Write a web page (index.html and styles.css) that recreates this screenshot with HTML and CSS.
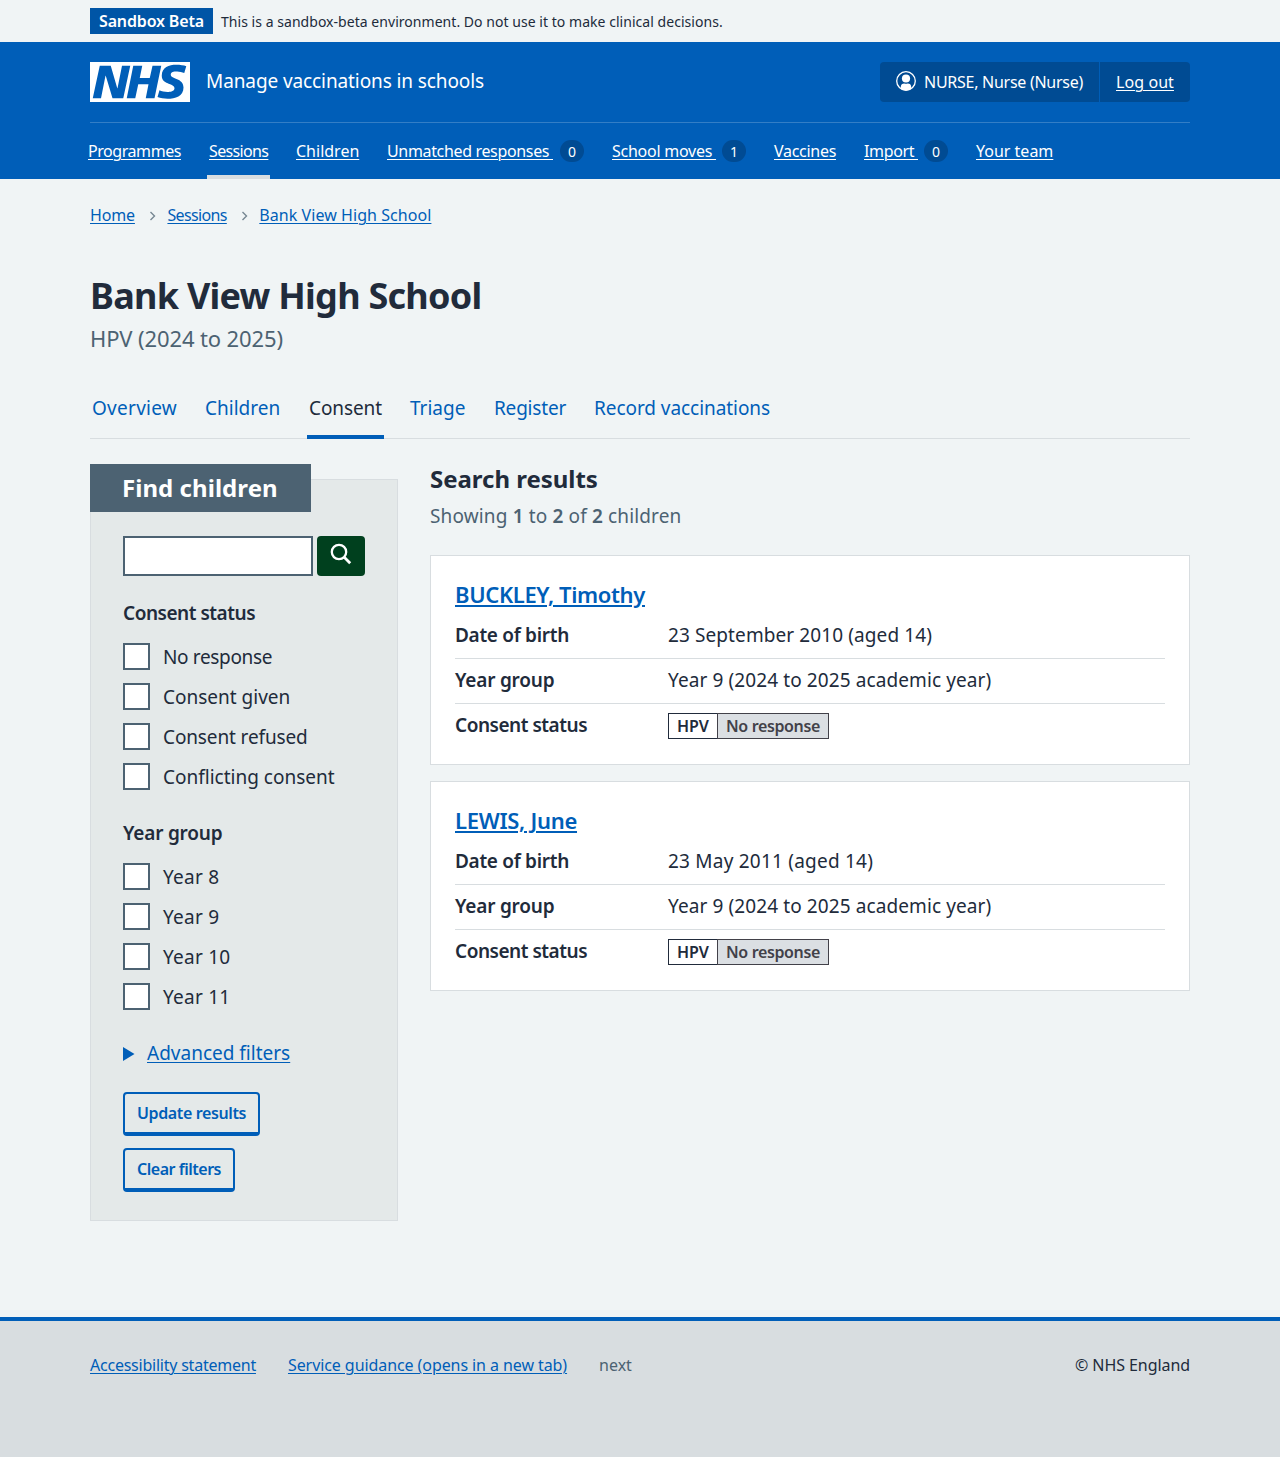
FILE: index.html
```html
<!DOCTYPE html>
<html lang="en">
<head>
<meta charset="utf-8">
<title>Bank View High School – Manage vaccinations in schools</title>
<link rel="stylesheet" href="styles.css">
</head>
<body>
<div class="env"><div class="container env-inner"><strong class="env-tag">Sandbox Beta</strong><span class="env-text">This is a sandbox-beta environment. Do not use it to make clinical decisions.</span></div></div>
<header class="header">
  <div class="container">
    <div class="header-top">
      <a class="logo" href="#" aria-label="NHS">
        <svg width="100" height="40" viewBox="0 0 200 80"><path fill="#fff" d="M0 0h200v80H0z"/><path fill="#005eb8" d="M172.500 5.500c-14.500 0-29 5-29 22 0 10.200 7.700 13.500 14.700 16.300l.7.300c5.400 2 10.100 3.900 10.100 8.400 0 6.500-8.500 7.500-14 7.500s-12.500-1.500-16-3.500L135 70c5.500 2 13.500 3.500 20 3.500 15.500 0 32-4.500 32-22.500 0-19.500-25.500-16.500-25.500-25.500 0-5.500 5.500-6.500 12.500-6.500a35 35 0 0 1 14.500 3l4-13.500c-4.500-2-12-3-20-3Zm-131 2h-22l-14 65H22l9-45h.5l13.500 45h21.500l14-65H64l-9 45h-.5l-13-45Zm63 0h-18l-13 65h17l6-28H117l-5.500 28H129l13.500-65H125L119.500 32h-20l5-24.500Z"/></svg>
      </a>
      <a class="service" href="#">Manage vaccinations in schools</a>
      <div class="account">
        <div class="account-item account-user"><svg class="account-icon" width="20" height="20" viewBox="0 0 20 20"><defs><clipPath id="disc"><circle cx="10" cy="10" r="9.500"/></clipPath></defs><circle cx="10" cy="10" r="9.300" fill="none" stroke="#fff" stroke-width="1.300"/><circle cx="10" cy="7.500" r="4.100" fill="#fff"/><path clip-path="url(#disc)" fill="#fff" d="M4.800 20v-4.200c0-2.200 1.500-3.400 3.400-3.400.6.300 1.200.4 1.800.4s1.200-.1 1.800-.4c1.900 0 3.400 1.200 3.400 3.400V20z"/></svg><span>NURSE, Nurse (Nurse)</span></div>
        <div class="account-item account-out"><a href="#">Log out</a></div>
      </div>
    </div>
    <nav class="nav">
      <div class="nav-item"><a class="l-prog" href="#">Programmes</a></div>
      <div class="nav-item is-current"><a class="l-sess" href="#">Sessions</a></div>
      <div class="nav-item"><a href="#">Children</a></div>
      <div class="nav-item"><a class="l-unm" href="#">Unmatched responses&nbsp;</a><span class="badge">0</span></div>
      <div class="nav-item"><a class="l-moves" href="#">School moves&nbsp;</a><span class="badge">1</span></div>
      <div class="nav-item"><a class="l-vac" href="#">Vaccines</a></div>
      <div class="nav-item"><a class="l-imp" href="#">Import&nbsp;</a><span class="badge">0</span></div>
      <div class="nav-item"><a href="#">Your team</a></div>
    </nav>
  </div>
</header>
<div class="container">
  <nav class="crumbs">
    <a class="l-home" href="#">Home</a>
    <svg width="8" height="10" viewBox="0 0 8 10"><path d="M1.500 1l4 4-4 4" fill="none" stroke="#768692" stroke-width="1.400"/></svg>
    <a class="l-sess" href="#">Sessions</a>
    <svg width="8" height="10" viewBox="0 0 8 10"><path d="M1.500 1l4 4-4 4" fill="none" stroke="#768692" stroke-width="1.400"/></svg>
    <a class="l-crumb" href="#">Bank View High School</a>
  </nav>
  <h1>Bank View High School</h1>
  <p class="caption">HPV (2024 to 2025)</p>
  <nav class="tabs">
    <a class="l-over" href="#">Overview</a>
    <a href="#">Children</a>
    <a class="is-current" href="#">Consent</a>
    <a href="#">Triage</a>
    <a class="l-reg" href="#">Register</a>
    <a class="l-rec" href="#">Record vaccinations</a>
  </nav>
  <div class="columns">
    <form class="filters">
      <h2 class="filters-title">Find children</h2>
      <div class="search"><input type="text" aria-label="Search"><button class="search-btn" type="button" aria-label="Search"><svg width="24" height="24" viewBox="0 0 24 24" fill="none" stroke="#fff" stroke-width="2.300"><circle cx="10" cy="10" r="7.200"/><path d="M15 15l6.200 6.200" stroke-width="2.800"/></svg></button></div>
      <fieldset class="group">
        <legend class="l-cs">Consent status</legend>
        <label class="check"><input type="checkbox"><span class="l-nr">No response</span></label>
        <label class="check"><input type="checkbox"><span>Consent given</span></label>
        <label class="check"><input type="checkbox"><span class="l-ref">Consent refused</span></label>
        <label class="check"><input type="checkbox"><span>Conflicting consent</span></label>
      </fieldset>
      <fieldset class="group">
        <legend class="l-yg">Year group</legend>
        <label class="check"><input type="checkbox"><span class="l-year">Year 8</span></label>
        <label class="check"><input type="checkbox"><span class="l-year">Year 9</span></label>
        <label class="check"><input type="checkbox"><span class="l-year">Year 10</span></label>
        <label class="check"><input type="checkbox"><span class="l-year">Year 11</span></label>
      </fieldset>
      <div class="advanced"><svg width="12" height="14" viewBox="0 0 12 14"><path d="M0 0l11.500 7L0 14z" fill="#005eb8"/></svg><a href="#">Advanced filters</a></div>
      <button class="btn btn-update" type="button">Update results</button>
      <button class="btn btn-clear" type="button">Clear filters</button>
    </form>
    <main class="results">
      <h2>Search results</h2>
      <p class="showing">Showing <b>1</b> to <b>2</b> of <b>2</b> children</p>
      <article class="card">
        <h3><a class="l-buck" href="#">BUCKLEY, Timothy</a></h3>
        <dl>
          <div class="row"><dt class="l-dob">Date of birth</dt><dd>23 September 2010 (aged 14)</dd></div>
          <div class="row"><dt class="l-yg">Year group</dt><dd>Year 9 (2024 to 2025 academic year)</dd></div>
          <div class="row"><dt class="l-cs">Consent status</dt><dd class="tags"><strong class="tag-name">HPV</strong><strong class="tag-status">No response</strong></dd></div>
        </dl>
      </article>
      <article class="card">
        <h3><a class="l-lewis" href="#">LEWIS, June</a></h3>
        <dl>
          <div class="row"><dt class="l-dob">Date of birth</dt><dd class="l-may">23 May 2011 (aged 14)</dd></div>
          <div class="row"><dt class="l-yg">Year group</dt><dd>Year 9 (2024 to 2025 academic year)</dd></div>
          <div class="row"><dt class="l-cs">Consent status</dt><dd class="tags"><strong class="tag-name">HPV</strong><strong class="tag-status">No response</strong></dd></div>
        </dl>
      </article>
    </main>
  </div>
</div>
<footer class="footer">
  <div class="container footer-inner">
    <a class="l-acc" href="#">Accessibility statement</a>
    <a class="l-serv" href="#">Service guidance (opens in a new tab)</a>
    <span class="footer-next">next</span>
    <span class="footer-copy">© NHS England</span>
  </div>
</footer>
</body>
</html>
```
FILE: styles.css
```css
* { box-sizing: border-box; }
body { margin: 0; min-height: 1457px; display: flex; flex-direction: column; background: #f0f4f5; color: #212b3b; font: 400 16px/24px "Noto Sans", "Open Sans", sans-serif; white-space: nowrap; }
h1, h2, h3, p, dl, dd, dt, fieldset, legend { margin: 0; padding: 0; border: 0; }
h3, b, strong, dt, legend { font-weight: 600; }
h1, h2 { font-weight: 700; }
a { color: #005eb8; text-underline-offset: 2px; text-decoration-thickness: 1px; }
svg { display: block; flex: none; }
.container { width: 1100px; margin: 0 auto; }

.env { height: 42px; padding-top: 8px; }
.env-inner { display: flex; gap: 8px; }
.env-tag { width: 123px; height: 26px; padding-left: 9px; background: #0055a6; color: #fff; line-height: 26px; letter-spacing: -.15px; }
.env-text { font-size: 14px; line-height: 27px; letter-spacing: .04px; }

.header { height: 137px; background: #005eb8; color: #fff; }
.header a { color: #fff; }
.header-top { height: 81px; padding-top: 20px; display: flex; border-bottom: 1px solid #337ec6; }
.service.service { margin-left: 16px; font-size: 19px; line-height: 38px; text-decoration: none; letter-spacing: -.1px; }
.account { height: 40px; margin-left: auto; display: flex; background: #004b93; border-radius: 4px; line-height: 40px; }
.account-user { width: 220px; padding-left: 16px; display: flex; gap: 8px; border-right: 1px solid #005eb8; letter-spacing: -.27px; }
.account-icon { margin-top: 9px; }
.account-out { width: 90px; padding-left: 16px; letter-spacing: .08px; }
.nav { height: 56px; margin-left: -4px; display: grid; grid-template-columns: 97px 63px 67px 201px 138px 66px 88px 81px; column-gap: 24px; }
.nav-item { height: 56px; padding: 0 2px; display: flex; justify-content: space-between; line-height: 56px; }
.nav-item.is-current { border-bottom: 4px solid #d8dde0; }
.badge { width: 24px; height: 22px; margin-top: 17px; border-radius: 12px; background: #004b93; font-size: 14px; line-height: 23px; text-align: center; }

.crumbs { height: 72px; display: flex; align-items: center; }
.crumbs svg { margin: 1px 10.500px 0 14px; }
h1 { margin-top: 23px; font-size: 36px; line-height: 44px; letter-spacing: -.74px; }
.caption { margin-top: 4px; color: #4c6272; font-size: 22px; line-height: 32px; letter-spacing: -.12px; }
.tabs { height: 57px; margin-top: 28px; display: grid; grid-template-columns: 89px 80px 77px 60px 76px 180px; column-gap: 24px; border-bottom: 1px solid #d8dde0; font-size: 19px; line-height: 52px; }
.tabs a { height: 57px; padding: 0 2px; text-decoration: none; }
.tabs a.is-current { color: #212b3b; border-bottom: 4px solid #005eb8; letter-spacing: -.09px; }

.columns { display: grid; grid-template-columns: 308px 760px; column-gap: 32px; align-items: start; margin-top: 25px; }
.filters { height: 742px; margin-top: 15px; padding: 0 32px; border: 1px solid #d8dde0; background: #e4e9e9; font-size: 19px; }
.filters-title { width: 221px; height: 48px; margin: -16px 0 24px -33px; padding-left: 32px; background: #4c6272; color: #fff; font-size: 24px; line-height: 48px; letter-spacing: .05px; }
.search { display: flex; gap: 4px; }
.search input { width: 190px; height: 40px; margin: 0; border: 2px solid #4c6272; background: #fff; }
.search-btn { width: 48px; height: 40px; padding: 6px 0 0 12px; display: flex; align-items: flex-start; border: 0; border-radius: 4px; background: #00401e; }
.group { min-width: 0; }
.group legend { height: 60px; padding-top: 24px; line-height: 26px; }
.check { height: 40px; display: flex; gap: 13px; line-height: 42px; }
.check input { appearance: none; width: 27px; height: 27px; margin: 6.500px 0 0; border: 2px solid #4c6272; background: #fff; }
.advanced { height: 56px; display: flex; align-items: center; gap: 12px; margin: 9px 0 11px; }
.advanced svg { margin-top: 2px; }
.btn { display: block; height: 44px; margin: 0 0 12px; padding: 0 12px; border: 2px solid #005eb8; border-bottom-width: 4px; border-radius: 4px; background: transparent; color: #005eb8; font: 600 16px/38px "Noto Sans", "Open Sans", sans-serif; text-align: left; }
.btn-update { width: 137px; letter-spacing: -.38px; }
.btn-clear { width: 112px; letter-spacing: -.48px; }

.results { font-size: 19px; }
.results h2 { font-size: 24px; line-height: 30px; letter-spacing: -.03px; }
.showing { margin: 8px 0 24px; color: #4c6272; line-height: 29px; letter-spacing: .14px; }
.card { height: 210px; margin-bottom: 16px; padding: 24px; border: 1px solid #d8dde0; background: #fff; }
.card h3 { height: 34px; font-size: 22px; line-height: 28px; }
.card h3 a { text-decoration-thickness: 2px; }
.row { height: 45px; display: flex; border-bottom: 1px solid #d8dde0; line-height: 43px; }
.row:last-child { border: 0; }
.row dt { width: 213px; }
.row dd { letter-spacing: .1px; }
.row dd.tags { display: flex; padding-top: 9px; font-size: 16px; line-height: 25px; }
.tag-name { height: 26px; width: 49px; padding-left: 8px; border: 1px solid #212b3b; border-right: 0; letter-spacing: -.05px; }
.tag-status { height: 26px; width: 112px; padding-left: 8px; border: 1px solid #424149; background: #dbdfe3; color: #424149; letter-spacing: -.36px; }

.footer { height: 140px; margin-top: auto; border-top: 4px solid #005eb8; background: #d8dde0; }
.footer-inner { padding-top: 32px; display: flex; gap: 32px; }
.footer-next { color: #4c6272; }
.footer-copy { margin-left: auto; letter-spacing: -.07px; }

/* Tracking per label */
.l-prog { letter-spacing: -.44px; }
.l-home { letter-spacing: -.15px; }
.l-sess { letter-spacing: -.64px; }
.l-crumb { letter-spacing: .06px; }
.l-unm { letter-spacing: -.34px; }
.l-moves { letter-spacing: -.25px; }
.l-vac { letter-spacing: -.29px; }
.l-imp { letter-spacing: -.35px; }
.l-over { letter-spacing: .27px; }
.l-reg { letter-spacing: -.2px; }
.l-rec { letter-spacing: -.06px; }
.l-cs { letter-spacing: -.47px; }
.l-yg { letter-spacing: -.2px; }
.l-dob { letter-spacing: -.3px; }
.l-nr { letter-spacing: -.35px; }
.l-ref { letter-spacing: -.13px; }
.l-year { letter-spacing: .25px; }
.row .l-may { letter-spacing: .22px; }
.l-buck { letter-spacing: -.36px; }
.l-lewis { letter-spacing: -.28px; }
.l-acc { letter-spacing: -.23px; }
.l-serv { letter-spacing: -.08px; }
```
